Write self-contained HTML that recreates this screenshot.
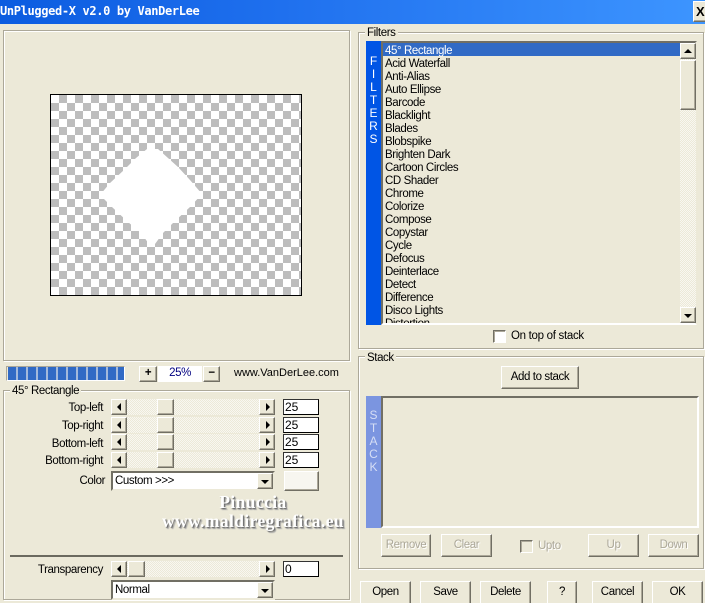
<!DOCTYPE html>
<html><head><meta charset="utf-8"><style>
html,body{margin:0;padding:0;width:705px;height:603px;overflow:hidden;background:#ece9d8}
body{position:relative;font:11.5px "Liberation Sans",sans-serif;letter-spacing:-.4px;color:#000}
div,span{position:absolute;box-sizing:border-box;white-space:nowrap}
.title{left:0;top:0;width:705px;height:24px;background:linear-gradient(90deg,#0b5ce0,#1f70ee 40%,#3d95ff);color:#fff;font:bold 12px "DejaVu Sans Mono","Liberation Mono",monospace;line-height:23px;letter-spacing:-.35px}
.group{border:1px solid #aca899;box-shadow:inset 1px 1px 0 #fff,1px 1px 0 #fff}
.legend{background:#ece9d8;padding:0 2px;height:13px;line-height:13px}
.btn{background:#ece9d8;border:1px solid;border-color:#fff #716f64 #716f64 #fff;box-shadow:inset -1px -1px 0 #aca899;text-align:center;line-height:21px}
.dis{color:#aca899;text-shadow:1px 1px 0 #fff}
.track{background:repeating-conic-gradient(#f8f7f1 0 25%,#ece9d8 0 50%) 0 0/2px 2px;height:16px}
.a{width:16px;height:16px}
.a:after{content:"";position:absolute;left:5px;top:3px;border:4px solid transparent}
.l:after{border-right-color:#000;border-left:0;left:5px}
.r:after{border-left-color:#000;border-right:0;left:6px}
.u:after{border-bottom-color:#000;border-top:0;left:3px;top:5px}
.d:after{border-top-color:#000;border-bottom:0;left:3px;top:6px}
.lab{text-align:right;width:100px;left:3px;height:14px;line-height:14px}
.inp{left:283px;width:36px;height:16px;background:#fff;border:1px solid;border-color:#333 #000 #000 #333;line-height:14px;padding-left:1px;font-size:12px;letter-spacing:0}
.combo{left:111px;width:164px;height:20px;background:#fff;border:2px solid;border-color:#716f64 #ece9d8 #ece9d8 #716f64;line-height:17px;padding-left:2px}
.combo .a{right:0;top:0;left:auto;height:16px}
.list{left:385px;line-height:13px;height:13px}
.strip{color:#fff;text-align:center;width:15px;font-size:12px;line-height:13px;letter-spacing:0}
.wm{left:150px;width:206px;text-align:center;font:bold 17.5px/18px 'Liberation Serif',serif;color:#fff;letter-spacing:.4px;text-shadow:1px 1px 1px #666,2px 2px 1px #aaa}
</style></head><body>
<div class="title">UnPlugged-X v2.0 by VanDerLee</div>
<div class="btn" style="left:693px;top:1px;width:14px;height:21px;font:bold 13px/19px 'Liberation Sans',sans-serif;letter-spacing:0;text-align:left;padding-left:2px">X</div>

<div class="group" style="left:3px;top:30px;width:347px;height:331px"></div>
<div style="left:50px;top:94px;width:252px;height:202px;border:1px solid #000;background:conic-gradient(#bdbdbd 25%,#fff 0 50%,#bdbdbd 0 75%,#fff 0) 0 0/16px 16px"></div>
<svg style="position:absolute;left:0;top:0" width="705" height="603"><path d="M147 149L158 149L168 158L178 167L190 180L202 194L190 207L174 222L163 233L155 244L149 244L141 233L128 222L112 207L100 195L110 183L124 170L136 158Z" fill="#fff"/></svg>

<div style="left:6px;top:366px;width:119px;height:15px;background:#ece9d8;border:1px solid #fff;border-color:#aca899 #fff #fff #aca899"></div>
<div style="left:8px;top:367px;width:116px;height:13px;background:repeating-linear-gradient(90deg,#316ac5 0 8px,#a3b9dc 8px 10px)"></div>
<div class="btn" style="left:139px;top:366px;width:18px;height:16px;line-height:13px;font-weight:bold">+</div>
<div style="left:158px;top:366px;width:44px;height:16px;background:#fff;color:#000080;text-align:center;line-height:15px">25%</div>
<div class="btn" style="left:203px;top:366px;width:17px;height:16px;line-height:13px;font-weight:bold">−</div>
<div style="left:234px;top:366px;height:14px;line-height:14px;font-size:11px;letter-spacing:0">www.VanDerLee.com</div>

<div class="group" style="left:3px;top:390px;width:347px;height:210px"></div>
<div class="legend" style="left:10px;top:385px">45° Rectangle</div>

<div class="lab" style="top:401px">Top-left</div>
<div class="track" style="left:111px;top:399px;width:164px"></div>
<div class="btn a l" style="left:111px;top:399px"></div><div class="btn" style="left:157px;top:399px;width:17px;height:16px"></div><div class="btn a r" style="left:259px;top:399px"></div>
<div class="inp" style="top:399px">25</div>

<div class="lab" style="top:419px">Top-right</div>
<div class="track" style="left:111px;top:417px;width:164px"></div>
<div class="btn a l" style="left:111px;top:417px"></div><div class="btn" style="left:157px;top:417px;width:17px;height:16px"></div><div class="btn a r" style="left:259px;top:417px"></div>
<div class="inp" style="top:417px">25</div>

<div class="lab" style="top:437px">Bottom-left</div>
<div class="track" style="left:111px;top:434px;width:164px"></div>
<div class="btn a l" style="left:111px;top:434px"></div><div class="btn" style="left:157px;top:434px;width:17px;height:16px"></div><div class="btn a r" style="left:259px;top:434px"></div>
<div class="inp" style="top:434px">25</div>

<div class="lab" style="top:454px">Bottom-right</div>
<div class="track" style="left:111px;top:452px;width:164px"></div>
<div class="btn a l" style="left:111px;top:452px"></div><div class="btn" style="left:157px;top:452px;width:17px;height:16px"></div><div class="btn a r" style="left:259px;top:452px"></div>
<div class="inp" style="top:452px">25</div>

<div class="lab" style="top:474px;left:5px">Color</div>
<div class="combo" style="top:471px">Custom &gt;&gt;&gt;<div class="btn a d"></div></div>
<div class="btn" style="left:284px;top:471px;width:35px;height:20px;background:#f7f6f0"></div>

<div class="wm" style="top:493px">Pinuccia</div>
<div class="wm" style="top:512px">www.maldiregrafica.eu</div>

<div style="left:10px;top:555px;width:333px;height:2px;background:#6b6a5f"></div>
<div class="lab" style="top:563px">Transparency</div>
<div class="track" style="left:111px;top:561px;width:164px"></div>
<div class="btn a l" style="left:111px;top:561px"></div><div class="btn" style="left:128px;top:561px;width:17px;height:16px"></div><div class="btn a r" style="left:259px;top:561px"></div>
<div class="inp" style="top:561px">0</div>
<div class="combo" style="top:580px">Normal<div class="btn a d"></div></div>

<div class="group" style="left:358px;top:32px;width:346px;height:317px"></div>
<div class="legend" style="left:365px;top:27px">Filters</div>
<div style="left:366px;top:41px;width:15px;height:284px;background:#0055e5"></div>
<div class="strip" style="left:366px;top:55px">F</div>
<div class="strip" style="left:366px;top:68px">I</div>
<div class="strip" style="left:366px;top:81px">L</div>
<div class="strip" style="left:366px;top:94px">T</div>
<div class="strip" style="left:366px;top:107px">E</div>
<div class="strip" style="left:366px;top:120px">R</div>
<div class="strip" style="left:366px;top:133px">S</div>
<div style="left:381px;top:41px;width:316px;height:284px;border:2px solid;border-color:#716f64 #ece9d8 #fff #716f64;overflow:hidden;background:#ece9d8"></div>
<div style="left:383px;top:43px;width:297px;height:13px;background:#316ac5"></div>
<div class="list" style="top:45px;color:#fff">45° Rectangle</div>
<div class="list" style="top:58px">Acid Waterfall</div>
<div class="list" style="top:71px">Anti-Alias</div>
<div class="list" style="top:84px">Auto Ellipse</div>
<div class="list" style="top:97px">Barcode</div>
<div class="list" style="top:110px">Blacklight</div>
<div class="list" style="top:123px">Blades</div>
<div class="list" style="top:136px">Blobspike</div>
<div class="list" style="top:149px">Brighten Dark</div>
<div class="list" style="top:162px">Cartoon Circles</div>
<div class="list" style="top:175px">CD Shader</div>
<div class="list" style="top:188px">Chrome</div>
<div class="list" style="top:201px">Colorize</div>
<div class="list" style="top:214px">Compose</div>
<div class="list" style="top:227px">Copystar</div>
<div class="list" style="top:240px">Cycle</div>
<div class="list" style="top:253px">Defocus</div>
<div class="list" style="top:266px">Deinterlace</div>
<div class="list" style="top:279px">Detect</div>
<div class="list" style="top:292px">Difference</div>
<div class="list" style="top:305px">Disco Lights</div>
<div class="list" style="top:318px;height:5px;overflow:hidden">Distortion</div>
<div class="track" style="left:680px;top:43px;width:16px;height:280px"></div>
<div class="btn a u" style="left:680px;top:43px"></div>
<div class="btn" style="left:680px;top:60px;width:16px;height:50px"></div>
<div class="btn a d" style="left:680px;top:307px"></div>
<div style="left:493px;top:330px;width:13px;height:13px;background:#fff;border:1px solid;border-color:#716f64 #fff #fff #716f64;box-shadow:inset 1px 1px 0 #aca899"></div>
<div style="left:511px;top:329px;line-height:14px;letter-spacing:-.3px">On top of stack</div>

<div class="group" style="left:358px;top:356px;width:346px;height:213px"></div>
<div class="legend" style="left:365px;top:352px">Stack</div>
<div class="btn" style="left:501px;top:366px;width:78px;height:23px;line-height:21px">Add to stack</div>
<div style="left:366px;top:396px;width:16px;height:132px;background:#7b95e0"></div>
<div class="strip" style="left:366px;top:409px;color:#d6def5">S</div>
<div class="strip" style="left:366px;top:422px;color:#d6def5">T</div>
<div class="strip" style="left:366px;top:435px;color:#d6def5">A</div>
<div class="strip" style="left:366px;top:448px;color:#d6def5">C</div>
<div class="strip" style="left:366px;top:461px;color:#d6def5">K</div>
<div style="left:381px;top:396px;width:318px;height:132px;border:2px solid;border-color:#716f64 #fff #fff #716f64"></div>
<div class="btn dis" style="left:381px;top:534px;width:50px;height:23px">Remove</div>
<div class="btn dis" style="left:441px;top:534px;width:51px;height:23px">Clear</div>
<div style="left:520px;top:540px;width:13px;height:13px;border:1px solid;border-color:#716f64 #fff #fff #716f64;box-shadow:inset 1px 1px 0 #aca899"></div>
<div class="dis" style="left:538px;top:539px;line-height:14px">Upto</div>
<div class="btn dis" style="left:588px;top:534px;width:51px;height:23px">Up</div>
<div class="btn dis" style="left:648px;top:534px;width:51px;height:23px">Down</div>

<div class="btn" style="left:360px;top:581px;width:51px;height:24px">Open</div>
<div class="btn" style="left:420px;top:581px;width:51px;height:24px">Save</div>
<div class="btn" style="left:480px;top:581px;width:51px;height:24px">Delete</div>
<div class="btn" style="left:547px;top:581px;width:30px;height:24px">?</div>
<div class="btn" style="left:592px;top:581px;width:51px;height:24px">Cancel</div>
<div class="btn" style="left:652px;top:581px;width:51px;height:24px">OK</div>
</body></html>
